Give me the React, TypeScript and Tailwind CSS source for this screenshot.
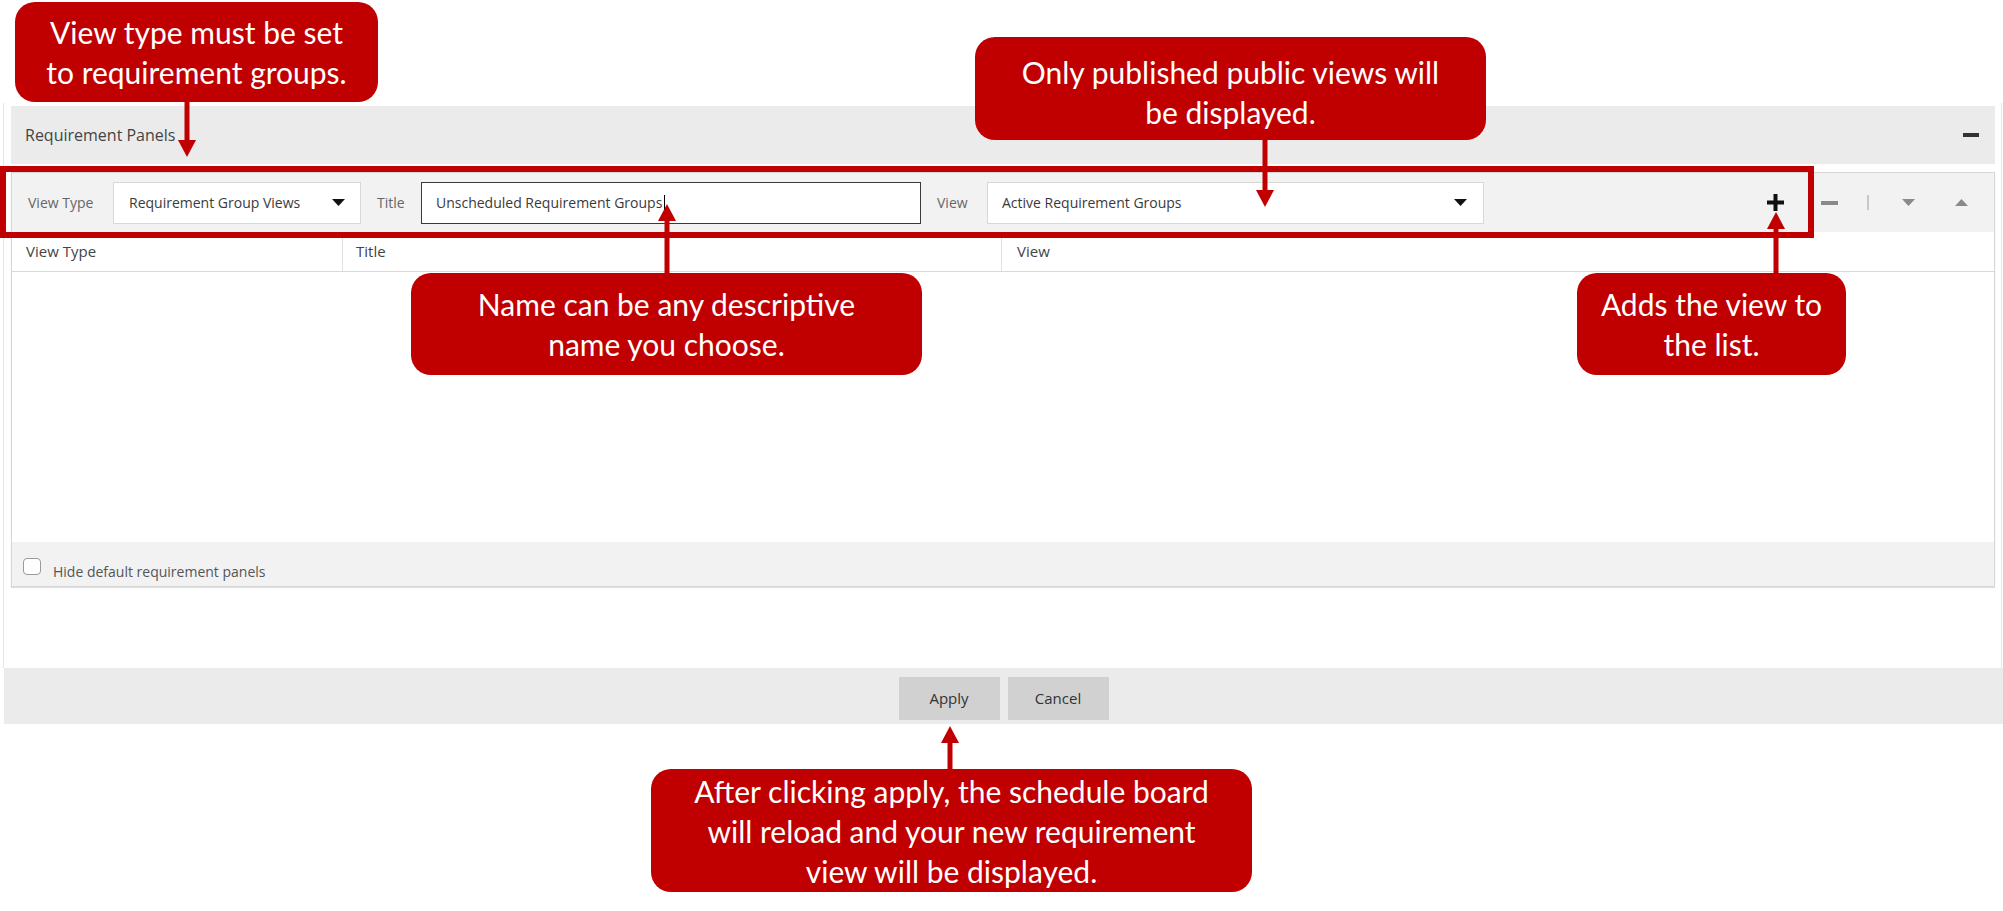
import React from "react";

// callout red used by the annotations
const RED = "#c00000";

const Caret = ({ color = "#111" }: { color?: string }) => (
  <svg width="13" height="7" viewBox="0 0 13 7">
    <polygon points="0,0 13,0 6.5,7" fill={color} />
  </svg>
);

const CaretUp = ({ color = "#8a8a8a" }: { color?: string }) => (
  <svg width="13" height="7" viewBox="0 0 13 7">
    <polygon points="0,7 13,7 6.5,0" fill={color} />
  </svg>
);

const Arrow = ({ len, up, className }: { len: number; up?: boolean; className: string }) => (
  <svg className={`absolute ${className}`} width="18" height={len} viewBox={`0 0 18 ${len}`}>
    {up ? (
      <>
        <rect x="6.5" y="16" width="5" height={len - 16} fill={RED} />
        <polygon points={`0,17 18,17 9,0`} fill={RED} />
      </>
    ) : (
      <>
        <rect x="6.5" y="0" width="5" height={len - 16} fill={RED} />
        <polygon points={`0,${len - 17} 18,${len - 17} 9,${len}`} fill={RED} />
      </>
    )}
  </svg>
);

const Callout = ({ className, children }: { className: string; children: React.ReactNode }) => (
  <div
    className={`absolute flex items-center justify-center rounded-[20px] bg-[#c00000] text-center font-['Lato',sans-serif] text-[30px] leading-[40px] text-white ${className}`}
  >
    <div>{children}</div>
  </div>
);

export default function App() {
  return (
    <div className="relative h-[911px] w-full overflow-hidden bg-white font-['Open_Sans',sans-serif] text-[#333]">
      {/* dialog */}
      <div className="ml-[3px] mt-[103px] w-[1999px] border-x border-[#e6e6e6] px-[7px] pr-[6px] pb-[81px] pt-[3px]">
        {/* header */}
        <div className="flex h-[58px] items-center justify-between bg-[#ebebeb] pl-[14px] pr-[16px]">
          <span className="text-[16px] text-[#444]">Requirement Panels</span>
          <span className="block h-[4px] w-[16px] bg-[#333]" />
        </div>

        {/* panel */}
        <div className="mt-[8px] border border-[#d6d6d6] shadow-[0_1px_1px_rgba(0,0,0,0.12)]">
          {/* toolbar */}
          <div className="flex h-[59px] items-center bg-[#f2f2f2] text-[14px]">
            <div className="w-[101px] pl-[16px] text-[#666]">View Type</div>
            <div className="flex h-[42px] w-[248px] items-center justify-between border border-[#d8d8d8] bg-white pl-[15px] pr-[15px] text-[#3a3a3a]">
              <span>Requirement Group Views</span>
              <Caret />
            </div>
            <div className="w-[60px] pl-[16px] text-[#666]">Title</div>
            <div className="flex h-[42px] w-[500px] items-center border-[1.5px] border-[#3a3a3a] bg-white pl-[14px] text-[#3a3a3a]">
              <span>Unscheduled Requirement Groups</span>
              <span className="ml-[2px] block h-[15px] w-px bg-black" />
            </div>
            <div className="w-[66px] pl-[16px] text-[#666]">View</div>
            <div className="flex h-[42px] w-[497px] items-center justify-between border border-[#d8d8d8] bg-white pl-[14px] pr-[16px] text-[#3a3a3a]">
              <span>Active Requirement Groups</span>
              <Caret />
            </div>
            <div className="flex-1" />
            <div className="flex items-center pr-[26px]">
              <svg width="17" height="17" viewBox="0 0 17 17">
                <rect x="0" y="6.5" width="17" height="4" fill="#111" />
                <rect x="6.5" y="0" width="4" height="17" fill="#111" />
              </svg>
              <span className="ml-[37px] block h-[4px] w-[17px] bg-[#8a8a8a]" />
              <span className="ml-[29px] block h-[15px] w-[2px] bg-[#c8c8c8]" />
              <span className="ml-[33px]">
                <Caret color="#8a8a8a" />
              </span>
              <span className="ml-[40px]">
                <CaretUp />
              </span>
            </div>
          </div>

          {/* column headers */}
          <div className="flex h-[40px] border-b border-[#d9d9d9] bg-white text-[15px] text-[#444]">
            <div className="flex w-[331px] items-center border-r border-[#e0e0e0] pl-[14px]">View Type</div>
            <div className="flex w-[659px] items-center border-r border-[#e0e0e0] pl-[13px]">Title</div>
            <div className="flex flex-1 items-center pl-[15px]">View</div>
          </div>

          {/* body */}
          <div className="h-[270px] bg-white" />

          {/* footer */}
          <div className="flex h-[44px] items-start bg-[#f2f2f2] pl-[11px] text-[14px] text-[#555]">
            <span className="mt-[16px] block h-[17px] w-[18px] rounded-[4px] border-[1.5px] border-[#9a9a9a] bg-white" />
            <span className="ml-[12px] mt-[20px] leading-[20px]">Hide default requirement panels</span>
          </div>
        </div>
      </div>

      {/* dialog buttons */}
      <div className="ml-[4px] flex h-[56px] justify-center gap-[8px] bg-[#ebebeb] pt-[9px]">
        <button className="h-[43px] w-[101px] bg-[#d1d1d1] text-[15px] text-[#333]">Apply</button>
        <button className="h-[43px] w-[101px] bg-[#d1d1d1] text-[15px] text-[#333]">Cancel</button>
      </div>

      {/* annotations */}
      <div className="absolute left-0 top-[166px] h-[72px] w-[1814px] border-[6px] border-[#c00000]" />

      <Arrow len={55} className="left-[178px] top-[102px]" />
      <Arrow len={67} className="left-[1256px] top-[140px]" />
      <Arrow len={69} up className="left-[658px] top-[204px]" />
      <Arrow len={61} up className="left-[1767px] top-[212px]" />
      <Arrow len={43} up className="left-[941px] top-[726px]" />

      <Callout className="left-[15px] top-[2px] h-[100px] w-[363px]">
        View type must be set
        <br />
        to requirement groups.
      </Callout>
      <Callout className="left-[975px] top-[37px] h-[103px] w-[511px] pt-[6px]">
        Only published public views will
        <br />
        be displayed.
      </Callout>
      <Callout className="left-[411px] top-[273px] h-[102px] w-[511px]">
        Name can be any descriptive
        <br />
        name you choose.
      </Callout>
      <Callout className="left-[1577px] top-[273px] h-[102px] w-[269px]">
        Adds the view to
        <br />
        the list.
      </Callout>
      <Callout className="left-[651px] top-[769px] h-[123px] w-[601px]">
        After clicking apply, the schedule board
        <br />
        will reload and your new requirement
        <br />
        view will be displayed.
      </Callout>
    </div>
  );
}
